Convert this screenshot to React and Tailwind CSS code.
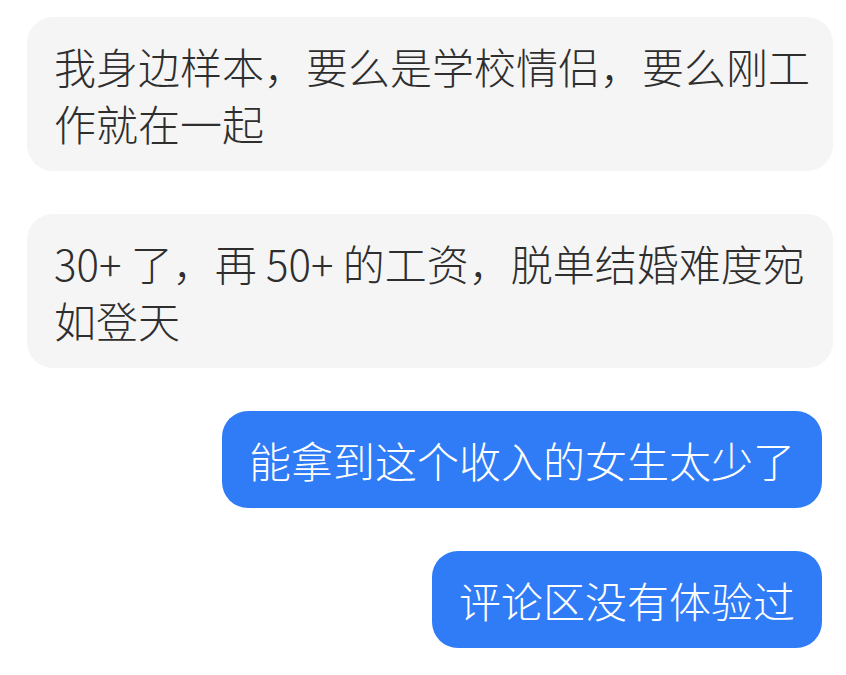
import React from 'react';

const messages = [
    { id: 1, side: 'left', text: '我身边样本，要么是学校情侣，要么刚工作就在一起' },
    { id: 2, side: 'left', text: '30+ 了，再 50+ 的工资，脱单结婚难度宛如登天' },
    { id: 3, side: 'right', text: '能拿到这个收入的女生太少了' },
    { id: 4, side: 'right', text: '评论区没有体验过' },
];

const App = () => {
    return (
        <div
            className="w-[846px] h-[675px] bg-white flex flex-col gap-[43px] pt-[17px] pl-[27px] pr-[13px] overflow-hidden font-light"
            style={{ fontFamily: '"Noto Sans CJK SC", "Noto Sans", sans-serif' }}
        >
            {messages.map(msg => (
                msg.side === 'left' ? (
                    <div
                        key={msg.id}
                        className="w-full bg-[#f5f5f5] rounded-[26px] pl-[27px] pr-[22px] py-[20px] text-[42px] leading-[57px] text-[#2e2e2e]"
                    >
                        {msg.text}
                    </div>
                ) : (
                    <div
                        key={msg.id}
                        className="self-end mr-[11px] bg-[#2f7cf6] rounded-[26px] px-[27px] py-[20px] text-[42px] leading-[57px] text-white"
                    >
                        {msg.text}
                    </div>
                )
            ))}
        </div>
    );
};

export default App;
